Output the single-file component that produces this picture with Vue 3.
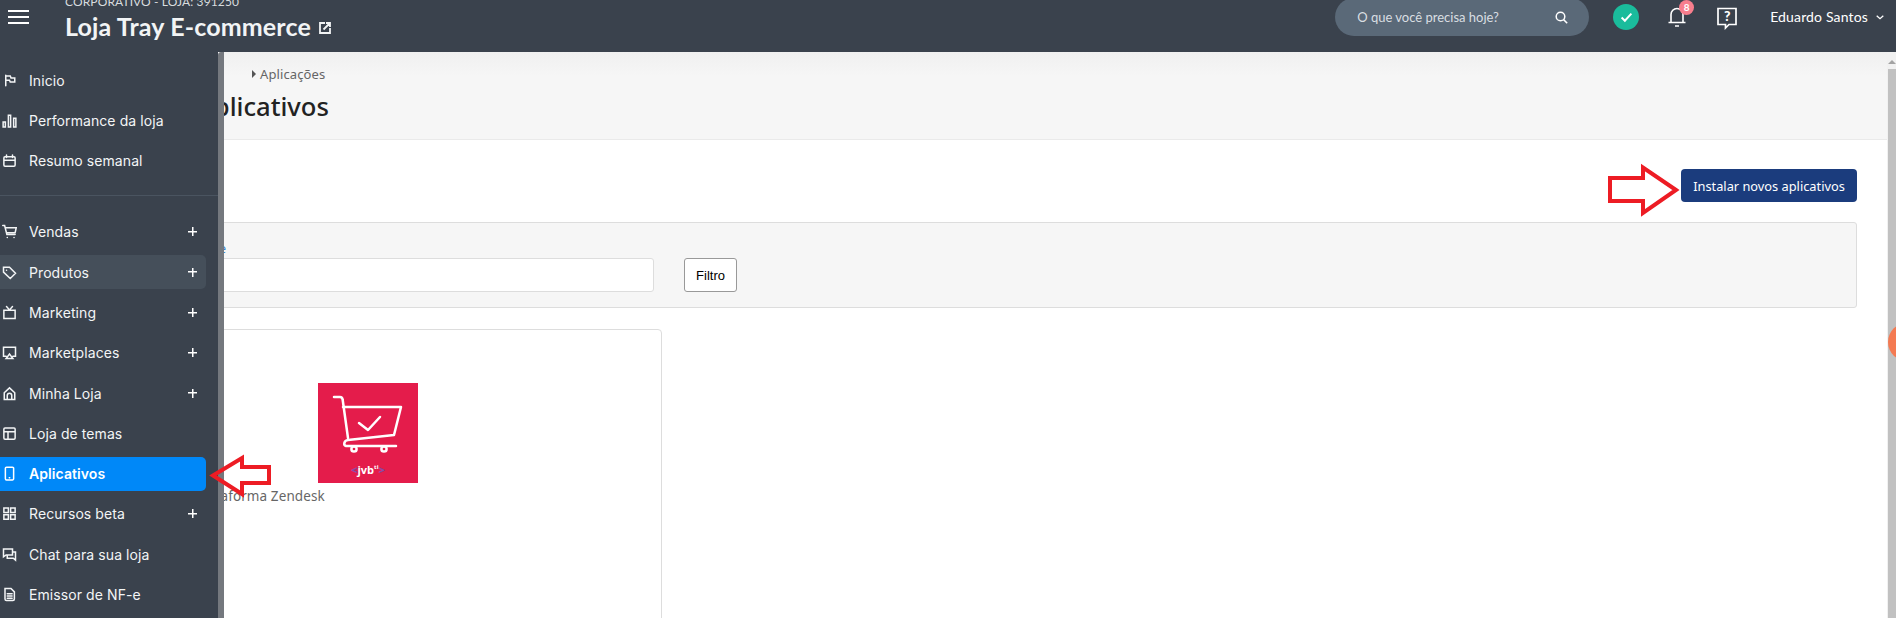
<script setup>
const top = [
  { n: 'Inicio', i: 'flag' },
  { n: 'Performance da loja', i: 'bars' },
  { n: 'Resumo semanal', i: 'cal' },
]
const rest = [
  { n: 'Vendas', i: 'cart', plus: true },
  { n: 'Produtos', i: 'tag', plus: true, hover: true },
  { n: 'Marketing', i: 'tv', plus: true },
  { n: 'Marketplaces', i: 'cast', plus: true },
  { n: 'Minha Loja', i: 'home', plus: true },
  { n: 'Loja de temas', i: 'layout' },
  { n: 'Aplicativos', i: 'phone', active: true },
  { n: 'Recursos beta', i: 'grid', plus: true },
  { n: 'Chat para sua loja', i: 'chat' },
  { n: 'Emissor de NF-e', i: 'doc' },
]
const icons = {
  flag: 'M5 3v14M5 4h6l1 2.500h5V12h-6l-1-2.500H5',
  bars: 'M1.500 12h3v6.500h-3zM8.500 3h3v15.500h-3zM15.500 7h3v11.500h-3z',
  cal: 'M4 5h12a1.500 1.500 0 0 1 1.500 1.500V16a1.500 1.500 0 0 1-1.500 1.500H4A1.500 1.500 0 0 1 2.500 16V6.500A1.500 1.500 0 0 1 4 5zM2.500 9.500h15M6 2.500V6M14 2.500V6',
  cart: 'M1 2h2.500l3 12h11M4.500 5H19l-1.500 6.500H6M7 18h.1M16 18h.1',
  tag: 'M2 3h8l8 8-7 7-9-8.500zM6 7h.1',
  tv: 'M2.500 7h15v11h-15zM6 2l4 4.500L14 2',
  cast: 'M5.500 15H2V3h16v12h-3.500M5.500 18 10 12l4.500 6z',
  home: 'M3 9 10 2.500 17 9v9H3zM7 18v-5.500a3 3 0 0 1 6 0V18',
  layout: 'M4 2.500h12A1.500 1.500 0 0 1 17.500 4v12a1.500 1.500 0 0 1-1.500 1.500H4A1.500 1.500 0 0 1 2.500 16V4A1.500 1.500 0 0 1 4 2.500zM2.500 7.500h15M8 7.500v10',
  phone: 'M6 1.500h8A1.500 1.500 0 0 1 15.500 3v14a1.500 1.500 0 0 1-1.500 1.500H6A1.500 1.500 0 0 1 4.500 17V3A1.500 1.500 0 0 1 6 1.500zM9.700 15.500h.6',
  grid: 'M2.500 2.500h6v6h-6zM11.500 2.500h6v6h-6zM2.500 11.500h6v6h-6zM11.500 11.500h6v6h-6z',
  chat: 'M2 2.500h12v8H5.500L2 13zM14 6.500h4v11l-3-2.500H7v-4.500',
  doc: 'M4 2h8l4.500 4.500V16a2 2 0 0 1-2 2h-8.500a2 2 0 0 1-2-2zM7 9h6.500M7 12h6.500M7 15h6.500',
}
</script>

<template>
  <div class="page">
    <header class="topbar">
      <button class="burger" aria-label="Menu"><i></i><i></i><i></i></button>
      <div class="store">
        <div class="store-sub">CORPORATIVO - LOJA: 391250</div>
        <div class="store-name">
          Loja Tray E-commerce
          <svg class="ext" width="12" height="12" viewBox="0 0 12 12" fill="none" stroke="#f2f4f5" stroke-width="1.800"><path d="M6 1H1v10h10V6M4.500 7.500 10.500 1.500M7 1h4v4"/></svg>
        </div>
      </div>
      <div class="top-right">
        <div class="search">
          <span>O que você precisa hoje?</span>
          <svg width="13" height="13" viewBox="0 0 13 13" fill="none" stroke="#fff" stroke-width="1.500"><circle cx="5.500" cy="5.500" r="4.300"/><path d="m8.600 8.600 3.600 3.600"/></svg>
        </div>
        <div class="ok">
          <svg width="13" height="11" viewBox="0 0 12 10" fill="none" stroke="#fff" stroke-width="1.800"><path d="m1.500 5 3 3 6-6.500"/></svg>
        </div>
        <div class="bell">
          <svg width="20" height="22" viewBox="0 0 20 22" fill="none" stroke="#fff" stroke-width="1.600"><path d="M4 16V8.500a6 6 0 0 1 12 0V16M1.500 16.500h17M8 20h4"/></svg>
          <span class="badge">8</span>
        </div>
        <div class="help">
          <svg width="20" height="23" viewBox="0 0 20 23" fill="none" stroke="#fff" stroke-width="1.700"><path d="M1 1.500h18v16h-7l-3.500 3.500v-3.500H1z"/></svg>
          <span>?</span>
        </div>
        <div class="user">
          <span>Eduardo Santos</span>
          <svg width="8" height="5" viewBox="0 0 8 5" fill="none" stroke="#fff" stroke-width="1.300"><path d="m.7.700 3.300 3 3.300-3"/></svg>
        </div>
      </div>
    </header>

    <div class="body">
      <nav class="sidebar">
        <div class="nav-group first">
          <a v-for="m in top" :key="m.n" class="item">
            <svg class="ic" viewBox="0 0 20 20" fill="none" stroke="currentColor" stroke-width="2" stroke-linecap="round"><path :d="icons[m.i]"/></svg>
            <span class="label">{{ m.n }}</span>
          </a>
        </div>
        <div class="nav-group second">
          <a v-for="m in rest" :key="m.n" class="item" :class="{ hover: m.hover, active: m.active }">
            <svg class="ic" viewBox="0 0 20 20" fill="none" stroke="currentColor" stroke-width="2" stroke-linecap="round"><path :d="icons[m.i]"/></svg>
            <span class="label">{{ m.n }}</span>
            <span v-if="m.plus" class="plus"></span>
          </a>
        </div>
      </nav>
      <div class="side-scroll"></div>

      <main class="main">
        <div class="main-inner">
          <section class="head">
            <div class="crumb"><span class="tri"></span>Aplicações</div>
            <h1>Aplicativos</h1>
          </section>
          <section class="content">
            <div class="actions">
              <button class="install">Instalar novos aplicativos</button>
            </div>
            <div class="well">
              <div class="field">
                <label>Nome</label>
                <div class="input"></div>
              </div>
              <button class="filter">Filtro</button>
            </div>
            <div class="card">
              <div class="logo">
                <svg width="100" height="100" viewBox="0 0 100 100" fill="none" stroke="#fff" stroke-width="2.500" stroke-linecap="round" stroke-linejoin="round">
                  <path d="M16 14h6c1.500 0 2.500 1 2.700 3L30 55"/>
                  <path d="M25 24h58l-7 28-46 5c-4 .5-5 5-2 6h50"/>
                  <path d="m41 40 9 7 12-13"/>
                  <circle cx="36" cy="66" r="2.600"/>
                  <circle cx="66" cy="66" r="2.600"/>
                </svg>
                <div class="jvb"><b>&lt;</b>jvb<sup>ti</sup><b>&gt;</b></div>
              </div>
              <div class="app-name">Plataforma Zendesk</div>
            </div>
          </section>
        </div>
      </main>
      <div class="page-scroll"><span class="up"></span><span class="thumb"></span></div>

      <span class="side-tab"></span>
      <svg class="arrow arrow-left" width="66" height="45" viewBox="0 0 66 45" fill="none" stroke="#ed1c24" stroke-width="4">
        <path d="M5 21.500 34 4v9h27v16H34v11z"/>
      </svg>
      <svg class="arrow arrow-right" width="74" height="54" viewBox="0 0 74 54" fill="none" stroke="#ed1c24" stroke-width="4">
        <path d="M70 27 37 4.500V15H4v23h33v12z"/>
      </svg>
    </div>
  </div>
</template>

<style scoped>
.page {
  width: 1896px;
  height: 618px;
  overflow: hidden;
  display: flex;
  flex-direction: column;
  background: #fff;
  font-family: "Noto Sans", sans-serif;
}
.topbar {
  height: 52px;
  flex: none;
  display: flex;
  background: #3a424d;
  color: #fff;
  overflow: hidden;
}
.burger {
  width: 21px;
  height: 14px;
  margin: 10px 0 0 8px;
  padding: 0;
  border: 0;
  background: none;
  display: flex;
  flex-direction: column;
  justify-content: space-between;
}
.burger i {
  display: block;
  height: 2px;
  background: #fff;
}
.store {
  margin: -6px 0 0 36px;
  font-family: Lato, sans-serif;
}
.store-sub {
  font-size: 12px;
  line-height: 16px;
  letter-spacing: .12px;
  color: #d8dcdf;
}
.store-name {
  font-size: 25px;
  line-height: 32px;
  font-weight: 700;
  letter-spacing: .15px;
  color: #f2f4f5;
  white-space: nowrap;
  display: flex;
  align-items: center;
  gap: 8px;
}
.ext { margin-top: 4px; }
.top-right {
  margin-left: auto;
  display: flex;
  align-items: flex-start;
  font-family: Lato, sans-serif;
}
.search {
  width: 254px;
  height: 38px;
  margin-top: -2px;
  border-radius: 19px;
  background: #5a6978;
  display: flex;
  align-items: center;
  justify-content: space-between;
  padding: 2px 21px 2px 22px;
  box-sizing: border-box;
  font-size: 13px;
  color: #d9dee2;
}
.ok {
  width: 26px;
  height: 26px;
  margin: 4px 0 0 24px;
  border-radius: 50%;
  background: #1abc9c;
  display: flex;
  align-items: center;
  justify-content: center;
}
.bell {
  position: relative;
  margin: 6px 0 0 28px;
  height: 22px;
}
.badge {
  position: absolute;
  left: 12px;
  top: -6px;
  width: 15px;
  height: 15px;
  border-radius: 50%;
  background: #f87e8d;
  font-size: 10px;
  font-weight: 700;
  line-height: 14px;
  text-align: center;
}
.help {
  position: relative;
  margin: 7px 0 0 30px;
  height: 23px;
}
.help span {
  position: absolute;
  left: 0;
  right: 0;
  top: 0;
  text-align: center;
  font-size: 14px;
  font-weight: 900;
  line-height: 18px;
}
.user {
  margin: 7px 12px 0 33px;
  display: flex;
  align-items: center;
  gap: 8px;
  font-size: 14px;
  line-height: 20px;
  letter-spacing: .15px;
  white-space: nowrap;
}
.body {
  flex: 1;
  min-height: 0;
  display: flex;
  position: relative;
}
.sidebar {
  width: 218px;
  flex: none;
  background: #3a424d;
  color: #fff;
  font-family: Inter, sans-serif;
}
.nav-group { padding-right: 12px; }
.nav-group.first {
  padding-top: 11px;
  padding-bottom: 11px;
  border-bottom: 1px solid #4a5460;
}
.nav-group.second { padding-top: 19px; }
.item {
  height: 34px;
  margin-bottom: 6.3px;
  display: flex;
  align-items: center;
  padding: 0 8px 0 2px;
  border-radius: 0 5px 5px 0;
  font-size: 14px;
  letter-spacing: .08px;
  white-space: nowrap;
  color: #f3f5f6;
}
.item.hover { background: #454f5a; }
.item.active {
  background: #0088f8;
  color: #fff;
  font-weight: 600;
}
.ic {
  flex: none;
  width: 15px;
  height: 15px;
}
.label { margin-left: 12px; }
.plus {
  width: 9px;
  height: 9px;
  margin-left: auto;
  margin-right: 1px;
  background: linear-gradient(#fff, #fff) center / 100% 1.5px no-repeat, linear-gradient(#fff, #fff) center / 1.5px 100% no-repeat;
}
.side-scroll {
  width: 6px;
  flex: none;
  background: #74787e;
  border-radius: 3px 0 0 0;
}
.main {
  flex: 1;
  min-width: 0;
  overflow: hidden;
}
.main-inner { margin-left: -46px; }
.head {
  height: 88px;
  box-sizing: border-box;
  background: linear-gradient(#f0f0f0, #f6f6f6 28%);
  border-bottom: 1px solid #eaeaea;
  padding: 13px 0 0 19px;
}
.crumb {
  display: flex;
  align-items: center;
  margin-left: 55px;
  font-size: 13px;
  line-height: 18px;
  letter-spacing: .1px;
  color: #666;
}
.tri {
  width: 0;
  height: 0;
  border-left: 4px solid #555;
  border-top: 4px solid transparent;
  border-bottom: 4px solid transparent;
  margin-right: 4px;
}
h1 {
  margin: 7px 0 0 0;
  font-size: 25.6px;
  line-height: 34px;
  font-weight: 500;
  color: #222;
}
.content { padding: 29px 30px 0 0; }
.actions {
  display: flex;
  justify-content: flex-end;
}
.install {
  width: 176px;
  height: 33px;
  border: 0;
  border-radius: 4px;
  background: #1b3c7d;
  color: #fff;
  font: 12.8px "Noto Sans", sans-serif;
}
.well {
  height: 86px;
  box-sizing: border-box;
  margin: 20px 0 0 -100px;
  border: 1px solid #ddd;
  border-radius: 3px;
  background: #f6f6f6;
  display: flex;
  padding-top: 18px;
}
.field {
  width: 575px;
  position: relative;
}
.field label {
  position: absolute;
  right: 428px;
  top: 0;
  font-size: 12px;
  line-height: 16px;
  color: #2f7fd0;
}
.input {
  height: 34px;
  margin-top: 17px;
  box-sizing: border-box;
  border: 1px solid #ddd;
  border-radius: 3px;
  background: #fff;
}
.filter {
  width: 53px;
  height: 34px;
  margin: 17px 0 0 30px;
  padding: 0;
  border: 1px solid #999;
  border-radius: 3px;
  background: #fff;
  color: #000;
  font: 13px "Liberation Sans", sans-serif;
}
.card {
  width: 607px;
  height: 400px;
  box-sizing: border-box;
  margin: 21px 0 0 -123px;
  border: 1px solid #ddd;
  border-radius: 4px;
  padding: 53px 0 0 262px;
}
.logo {
  width: 100px;
  height: 100px;
  background: #e41c4b;
  position: relative;
}
.logo svg { display: block; }
.jvb {
  position: absolute;
  left: 0;
  right: 0;
  top: 80px;
  text-align: center;
  font: 700 11px/14px "Open Sans", sans-serif;
  color: #fff;
  white-space: nowrap;
}
.jvb b { color: #8a4aa8; }
.jvb sup {
  font-size: 6px;
  line-height: 0;
}
.app-name {
  margin: 4px 0 0 -122px;
  font-size: 13.5px;
  line-height: 18px;
  letter-spacing: .1px;
  color: #666;
  white-space: nowrap;
}
.page-scroll {
  width: 9px;
  flex: none;
  background: #f1f1f1;
  display: flex;
  flex-direction: column;
  align-items: center;
}
.up {
  margin-top: 8px;
  border-left: 4px solid transparent;
  border-right: 4px solid transparent;
  border-bottom: 4px solid #a3a3a3;
}
.thumb {
  flex: 1;
  width: 8px;
  margin: 5px 0 0 1px;
  background: #c1c1c1;
}
.side-tab {
  position: absolute;
  left: 1888px;
  top: 271px;
  width: 38px;
  height: 38px;
  border-radius: 50%;
  background: #f47a52;
}
.arrow { position: absolute; }
.arrow-left { left: 208px; top: 402px; }
.arrow-right { left: 1606px; top: 111px; }
</style>
